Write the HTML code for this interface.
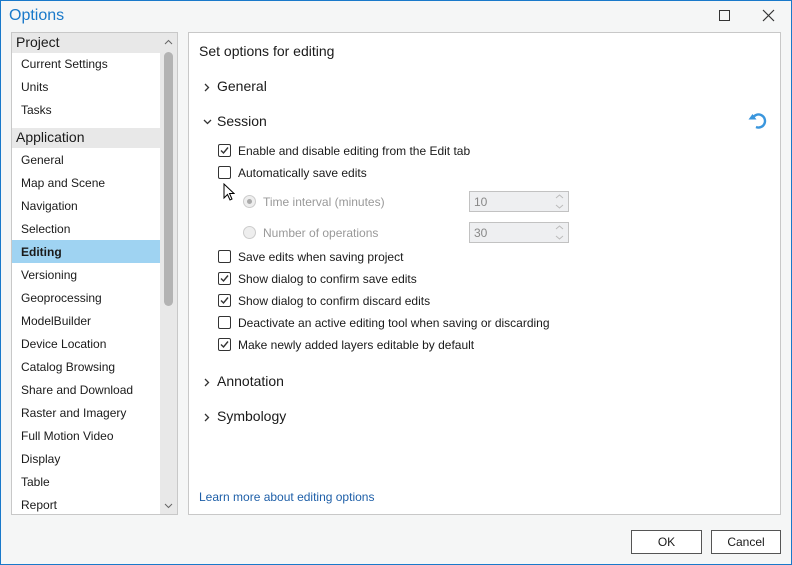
<!DOCTYPE html>
<html><head><meta charset="utf-8"><style>
*{margin:0;padding:0;box-sizing:border-box}
body{width:792px;height:565px;overflow:hidden;font-family:"Segoe UI","Liberation Sans",sans-serif;color:#1a1a1a}
#win{position:absolute;left:0;top:0;width:792px;height:565px;background:#f5f6f6;box-shadow:inset 0 0 0 1px #1979ca}
.a{position:absolute;white-space:nowrap}
.t{font-size:12px;line-height:16px}
.cb{position:absolute;width:13px;height:13px;border:1px solid #333;background:#fff;border-radius:2px}
.cb svg{position:absolute;left:0px;top:0px}
.btn{position:absolute;height:24px;border:1px solid #555;background:#fff;font-size:12px;text-align:center;line-height:22px}
</style></head><body><div id="win">
<div class="a" style="left:9px;top:7px;font-size:16px;color:#1979ca">Options</div>
<div class="a" style="left:719px;top:10px;width:11px;height:11px;border:1px solid #333"></div>
<svg class="a" style="left:762px;top:9px" width="13" height="13"><path d="M1 1L12 12M12 1L1 12" stroke="#333" stroke-width="1.2"/></svg>

<!-- left list -->
<div class="a" style="left:11px;top:32px;width:167px;height:483px;border:1px solid #c8c8c8;background:#fff;overflow:hidden">
 <div class="a" style="left:0;top:0;width:148px;height:20px;background:#e8e8e8"></div>
 <div class="a" style="left:4px;top:1px;font-size:14px">Project</div>
 <div class="a t" style="left:9px;top:23px">Current Settings</div>
 <div class="a t" style="left:9px;top:46px">Units</div>
 <div class="a t" style="left:9px;top:69px">Tasks</div>
 <div class="a" style="left:0;top:95px;width:148px;height:20px;background:#e8e8e8"></div>
 <div class="a" style="left:4px;top:96px;font-size:14px">Application</div>
 <div class="a" style="left:0;top:207px;width:148px;height:23px;background:#9fd3f2"></div>
 <div class="a t" style="left:9px;top:119px">General</div>
 <div class="a t" style="left:9px;top:142px">Map and Scene</div>
 <div class="a t" style="left:9px;top:165px">Navigation</div>
 <div class="a t" style="left:9px;top:188px">Selection</div>
 <div class="a t" style="left:9px;top:211px;font-weight:bold">Editing</div>
 <div class="a t" style="left:9px;top:234px">Versioning</div>
 <div class="a t" style="left:9px;top:257px">Geoprocessing</div>
 <div class="a t" style="left:9px;top:280px">ModelBuilder</div>
 <div class="a t" style="left:9px;top:303px">Device Location</div>
 <div class="a t" style="left:9px;top:326px">Catalog Browsing</div>
 <div class="a t" style="left:9px;top:349px">Share and Download</div>
 <div class="a t" style="left:9px;top:372px">Raster and Imagery</div>
 <div class="a t" style="left:9px;top:395px">Full Motion Video</div>
 <div class="a t" style="left:9px;top:418px">Display</div>
 <div class="a t" style="left:9px;top:441px">Table</div>
 <div class="a t" style="left:9px;top:464px">Report</div>
 <div class="a" style="left:148px;top:0;width:17px;height:481px;background:#e8e8e8"></div>
 <div class="a" style="left:152px;top:19px;width:9px;height:254px;background:#b3b3b3;border-radius:5px"></div>
 <svg class="a" style="left:152px;top:6px" width="9" height="6"><path d="M1 5L4.5 1.5L8 5" stroke="#666" fill="none"/></svg>
 <svg class="a" style="left:152px;top:470px" width="9" height="6"><path d="M1 1L4.5 4.5L8 1" stroke="#666" fill="none"/></svg>
</div>

<!-- right panel -->
<div class="a" style="left:188px;top:32px;width:593px;height:483px;border:1px solid #c8c8c8;background:#fff">
 <div class="a" style="left:10px;top:10px;font-size:14px">Set options for editing</div>
 <svg class="a" style="left:15px;top:50px" width="6" height="9"><path d="M1 1L4.5 4.5L1 8" stroke="#333" stroke-width="1.3" fill="none"/></svg>
 <div class="a" style="left:28px;top:45px;font-size:14px">General</div>
 <svg class="a" style="left:14px;top:86px" width="9" height="6"><path d="M1 1L4.5 4.5L8 1" stroke="#333" stroke-width="1.3" fill="none"/></svg>
 <div class="a" style="left:28px;top:80px;font-size:14px">Session</div>
 <svg class="a" style="left:559px;top:78px" width="21" height="20"><path d="M4.5 7.5A6.5 6.5 0 1 1 8 16" stroke="#3a96dd" stroke-width="2.4" fill="none"/><path d="M0.5 8.5L8.5 8.5L4.5 3Z" fill="#3a96dd"/></svg>
 <svg class="a" style="left:15px;top:345px" width="6" height="9"><path d="M1 1L4.5 4.5L1 8" stroke="#333" stroke-width="1.3" fill="none"/></svg>
 <div class="a" style="left:28px;top:340px;font-size:14px">Annotation</div>
 <svg class="a" style="left:15px;top:380px" width="6" height="9"><path d="M1 1L4.5 4.5L1 8" stroke="#333" stroke-width="1.3" fill="none"/></svg>
 <div class="a" style="left:28px;top:375px;font-size:14px">Symbology</div>
 <div class="a t" style="left:10px;top:456px;color:#1e5fa8">Learn more about editing options</div>
</div>

<!-- checkboxes (page coords) -->
<div class="cb" style="left:218px;top:144px"><svg width="11" height="11"><path d="M2 5.5L4.5 8L9 2.5" stroke="#333" stroke-width="1.4" fill="none"/></svg></div>
<div class="a t" style="left:238px;top:143px">Enable and disable editing from the Edit tab</div>
<div class="cb" style="left:218px;top:166px"></div>
<div class="a t" style="left:238px;top:165px">Automatically save edits</div>
<svg class="a" style="left:223px;top:183px" width="12" height="19"><path d="M1 1L1 15L4.5 11.5L7 17L9 16L6.5 10.5L11 10.5Z" fill="#fff" stroke="#000" stroke-width="1"/></svg>
<div class="a" style="left:243px;top:195px;width:13px;height:13px;border-radius:50%;border:1px solid #ccc;background:#eee"></div>
<div class="a" style="left:247px;top:199px;width:5px;height:5px;border-radius:50%;background:#aaa"></div>
<div class="a t" style="left:263px;top:194px;color:#999">Time interval (minutes)</div>
<div class="a" style="left:243px;top:226px;width:13px;height:13px;border-radius:50%;border:1px solid #ccc;background:#eee"></div>
<div class="a t" style="left:263px;top:225px;color:#999">Number of operations</div>
<div class="a" style="left:469px;top:191px;width:100px;height:21px;border:1px solid #c2c2c2;background:#eeeff1"></div>
<div class="a t" style="left:474px;top:194px;color:#888">10</div>
<svg class="a" style="left:555px;top:194px" width="9" height="15"><path d="M1 4L4.5 1L8 4M1 11L4.5 14L8 11" stroke="#bbb" fill="none"/></svg>
<div class="a" style="left:469px;top:222px;width:100px;height:21px;border:1px solid #c2c2c2;background:#eeeff1"></div>
<div class="a t" style="left:474px;top:225px;color:#888">30</div>
<svg class="a" style="left:555px;top:225px" width="9" height="15"><path d="M1 4L4.5 1L8 4M1 11L4.5 14L8 11" stroke="#bbb" fill="none"/></svg>
<div class="cb" style="left:218px;top:250px"></div>
<div class="a t" style="left:238px;top:249px">Save edits when saving project</div>
<div class="cb" style="left:218px;top:272px"><svg width="11" height="11"><path d="M2 5.5L4.5 8L9 2.5" stroke="#333" stroke-width="1.4" fill="none"/></svg></div>
<div class="a t" style="left:238px;top:271px">Show dialog to confirm save edits</div>
<div class="cb" style="left:218px;top:294px"><svg width="11" height="11"><path d="M2 5.5L4.5 8L9 2.5" stroke="#333" stroke-width="1.4" fill="none"/></svg></div>
<div class="a t" style="left:238px;top:293px">Show dialog to confirm discard edits</div>
<div class="cb" style="left:218px;top:316px"></div>
<div class="a t" style="left:238px;top:315px">Deactivate an active editing tool when saving or discarding</div>
<div class="cb" style="left:218px;top:338px"><svg width="11" height="11"><path d="M2 5.5L4.5 8L9 2.5" stroke="#333" stroke-width="1.4" fill="none"/></svg></div>
<div class="a t" style="left:238px;top:337px">Make newly added layers editable by default</div>

<div class="btn" style="left:631px;top:530px;width:71px">OK</div>
<div class="btn" style="left:711px;top:530px;width:70px">Cancel</div>
</div></body></html>
